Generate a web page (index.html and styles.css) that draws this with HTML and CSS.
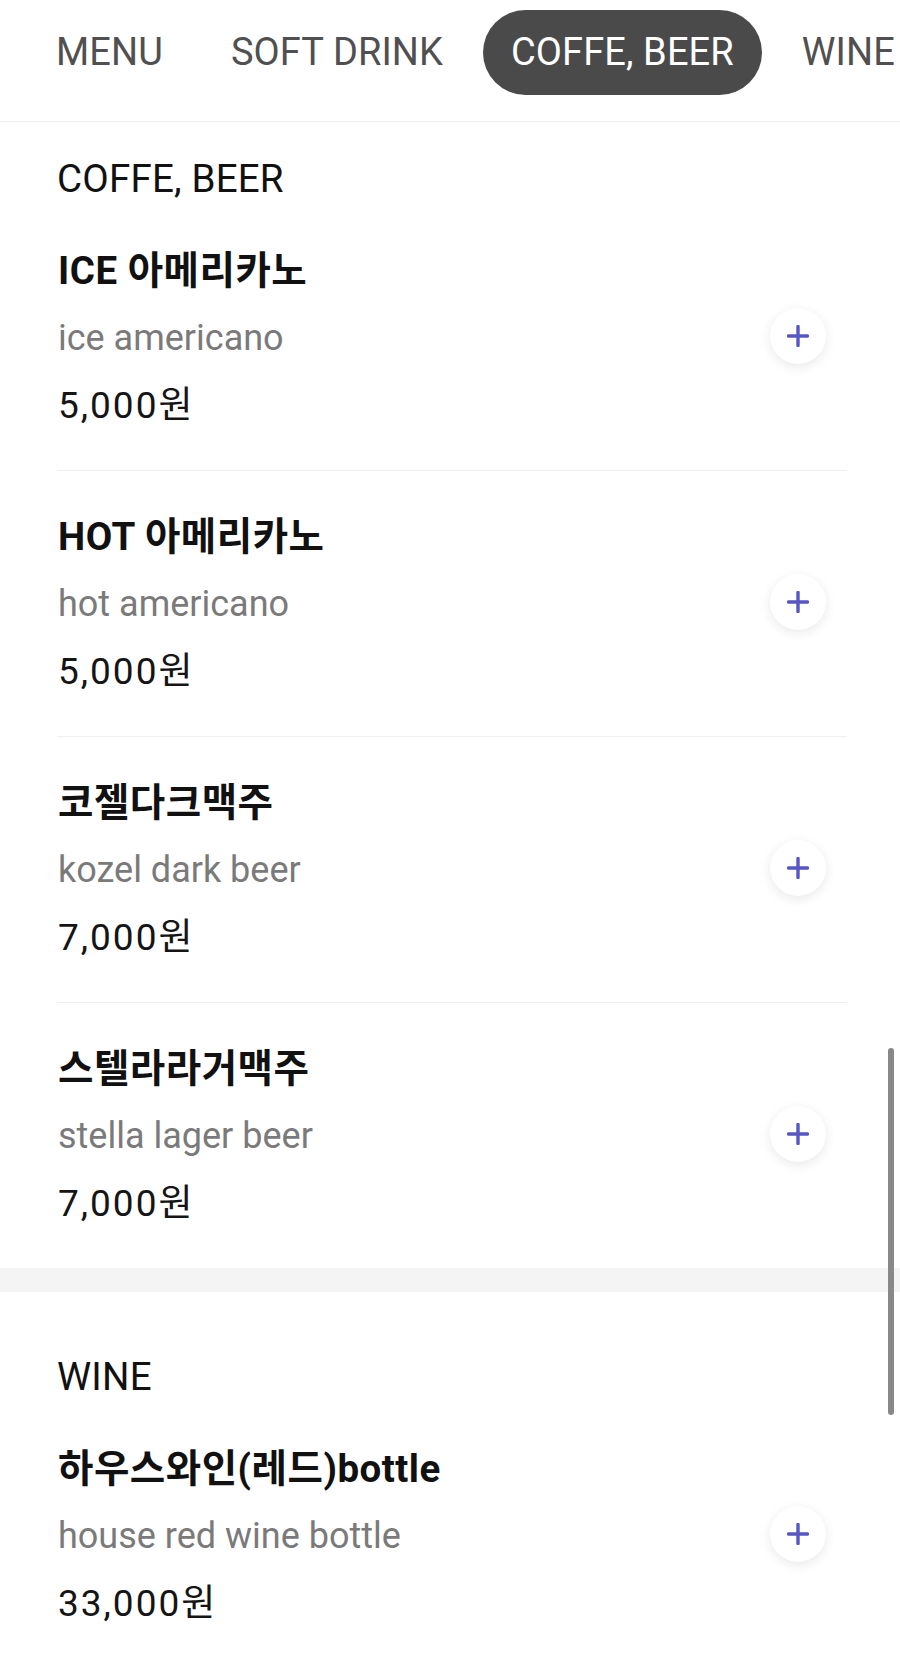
FILE: index.html
```html
<!DOCTYPE html>
<html lang="ko">
<head>
<meta charset="utf-8">
<title>Menu</title>
<link rel="stylesheet" href="styles.css">
</head>
<body>
<nav class="tabs">
  <a class="tab">MENU</a>
  <a class="tab">SOFT DRINK</a>
  <a class="tab active">COFFE, BEER</a>
  <a class="tab">WINE</a>
</nav>

<section class="section first">
  <h2 class="section-title">COFFE, BEER</h2>
  <div class="item">
    <div class="info">
      <div class="name">ICE 아메리카노</div>
      <div class="sub">ice americano</div>
      <div class="price">5,000원</div>
    </div>
    <button class="add"><svg viewBox="0 0 22 22" width="22" height="22"><path d="M11 1.5v19M1.5 11h19" stroke="#5656c6" stroke-width="3.4" stroke-linecap="round" fill="none"/></svg></button>
  </div>
  <div class="item">
    <div class="info">
      <div class="name">HOT 아메리카노</div>
      <div class="sub">hot americano</div>
      <div class="price">5,000원</div>
    </div>
    <button class="add"><svg viewBox="0 0 22 22" width="22" height="22"><path d="M11 1.5v19M1.5 11h19" stroke="#5656c6" stroke-width="3.4" stroke-linecap="round" fill="none"/></svg></button>
  </div>
  <div class="item">
    <div class="info">
      <div class="name">코젤다크맥주</div>
      <div class="sub">kozel dark beer</div>
      <div class="price">7,000원</div>
    </div>
    <button class="add"><svg viewBox="0 0 22 22" width="22" height="22"><path d="M11 1.5v19M1.5 11h19" stroke="#5656c6" stroke-width="3.4" stroke-linecap="round" fill="none"/></svg></button>
  </div>
  <div class="item last">
    <div class="info">
      <div class="name">스텔라라거맥주</div>
      <div class="sub">stella lager beer</div>
      <div class="price">7,000원</div>
    </div>
    <button class="add"><svg viewBox="0 0 22 22" width="22" height="22"><path d="M11 1.5v19M1.5 11h19" stroke="#5656c6" stroke-width="3.4" stroke-linecap="round" fill="none"/></svg></button>
  </div>
</section>

<div class="band"></div>

<section class="section second">
  <h2 class="section-title">WINE</h2>
  <div class="item last">
    <div class="info">
      <div class="name">하우스와인(레드)bottle</div>
      <div class="sub">house red wine bottle</div>
      <div class="price">33,000원</div>
    </div>
    <button class="add"><svg viewBox="0 0 22 22" width="22" height="22"><path d="M11 1.5v19M1.5 11h19" stroke="#5656c6" stroke-width="3.4" stroke-linecap="round" fill="none"/></svg></button>
  </div>
</section>

<div class="scrollbar"></div>
</body>
</html>
```

FILE: styles.css
```css
* { box-sizing: border-box; }

html, body {
  margin: 0;
  padding: 0;
  background: #ffffff;
}

body {
  width: 900px;
  overflow: hidden;
  font-family: Roboto, "Noto Sans CJK KR", sans-serif;
  color: #111111;
}

.tabs {
  display: flex;
  gap: 12px;
  padding: 10px 0 26px 28px;
  border-bottom: 1px solid #eeeeee;
  overflow: hidden;
  white-space: nowrap;
}

.tab {
  flex: none;
  height: 85px;
  line-height: 85px;
  padding: 0 28px;
  border-radius: 43px;
  font-size: 38px;
  letter-spacing: 0.1px;
  font-weight: 400;
  color: #505050;
}

.tab.active {
  background: #4a4a4a;
  color: #ffffff;
}

.section {
  padding: 0 53px 0 57px;
}

.section.first { padding-top: 35px; }
.section.second { padding-top: 63px; }

.section-title {
  margin: 0 0 4px;
  font-size: 38.5px;
  letter-spacing: 0.2px;
  line-height: 44px;
  font-weight: 400;
  color: #111111;
}

.item {
  display: flex;
  align-items: center;
  justify-content: space-between;
  padding: 44px 0 42px 1px;
  border-bottom: 1px solid #efefef;
}

.item.last { border-bottom: none; }

.info {
  display: flex;
  flex-direction: column;
}

.name {
  font-size: 38.5px;
  letter-spacing: 0.5px;
  line-height: 44px;
  font-weight: 700;
  color: #111111;
}

.sub {
  margin-top: 23px;
  font-size: 36px;
  line-height: 44px;
  color: #7a7a7a;
}

.price {
  margin-top: 24px;
  font-size: 37px;
  letter-spacing: 2px;
  line-height: 44px;
  color: #151515;
}

.add {
  flex: none;
  width: 56px;
  height: 56px;
  margin: 0 21px 5px 0;
  border: none;
  border-radius: 50%;
  background: #ffffff;
  box-shadow: 0 3px 12px rgba(0, 0, 0, 0.09);
  display: flex;
  align-items: center;
  justify-content: center;
  padding: 0;
}

.band {
  height: 24px;
  background: #f4f4f4;
}

.scrollbar {
  position: fixed;
  right: 6px;
  top: 1048px;
  width: 6px;
  height: 367px;
  border-radius: 3px;
  background: #888888;
}
```
